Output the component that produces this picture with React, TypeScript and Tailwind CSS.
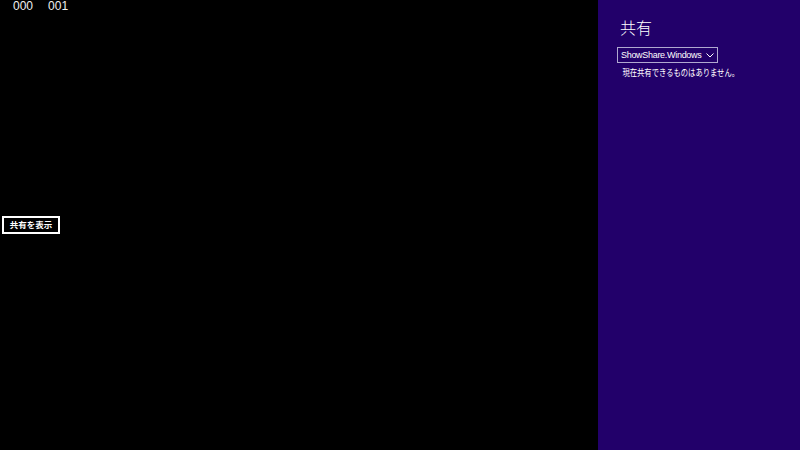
import React from "react";

export default function App() {
  const cjk = { fontFamily: '"Noto Sans", "Noto Sans CJK JP", sans-serif' };
  const lat = { fontFamily: '"Liberation Sans", "Noto Sans CJK JP", sans-serif' };
  return (
    <div className="w-[800px] h-[450px] flex bg-black overflow-hidden" style={cjk}>
      <div className="w-[598px] h-full flex flex-col">
        <div className="flex gap-[15px] pl-[13px] pt-[0px] text-[12px] leading-[13px] text-[#f0f0f0]" style={lat}>
          <span>000</span>
          <span>001</span>
        </div>
        <div className="mt-[203px] pl-[2px]">
          <button className="h-[18px] w-[58px] border-2 border-white text-white text-[8.5px] font-bold leading-[12px] flex items-center justify-center">
            共有を表示
          </button>
        </div>
      </div>
      <div className="flex-1 h-full bg-[#22006a] pl-[19px] pt-[17px] flex flex-col items-start">
        <div className="pl-[3px] text-[16px] leading-[22px] text-white font-light">共有</div>
        <div className="mt-[8px] h-[16px] w-[101px] border border-[#b0a8d0] flex items-center pl-[3px] text-[9px] tracking-[-0.3px] text-white leading-[14px]" style={lat}>
          <span>ShowShare.Windows</span>
          <svg className="ml-[5px]" width="8" height="5" viewBox="0 0 8 5">
            <path d="M0.5 0.5 L4 4 L7.5 0.5" stroke="white" strokeWidth="1" fill="none" />
          </svg>
        </div>
        <div className="mt-[3px] pl-[7px] text-[9.5px] leading-[14px] text-white whitespace-nowrap origin-left scale-x-[0.77]">現在共有できるものはありません。</div>
      </div>
    </div>
  );
}
